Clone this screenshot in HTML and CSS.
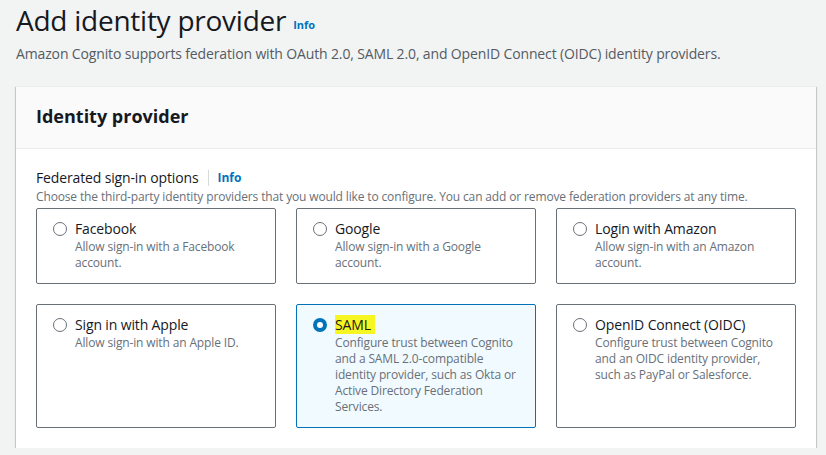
FILE: index.html
```html
<!DOCTYPE html>
<html>
<head>
<meta charset="utf-8">
<link rel="stylesheet" href="styles.css">
</head>
<body>
<div class="page">
  <header class="page-head">
    <h1 class="title">Add identity provider <a class="info info-sm">Info</a></h1>
    <p class="subtitle">Amazon Cognito supports federation with OAuth 2.0, SAML 2.0, and OpenID Connect (OIDC) identity providers.</p>
  </header>
  <section class="card">
    <div class="card-head">
      <h2 class="card-title">Identity provider</h2>
    </div>
    <div class="card-body">
      <div class="field-label">
        <span>Federated sign-in options</span>
        <span class="sep"></span>
        <a class="info">Info</a>
      </div>
      <div class="field-desc">Choose the third-party identity providers that you would like to configure. You can add or remove federation providers at any time.</div>
      <div class="tiles">
        <label class="tile">
          <span class="radio"></span>
          <span class="tile-text">
            <span class="tile-label">Facebook</span>
            <span class="tile-desc">Allow sign-in with a Facebook account.</span>
          </span>
        </label>
        <label class="tile">
          <span class="radio"></span>
          <span class="tile-text">
            <span class="tile-label">Google</span>
            <span class="tile-desc">Allow sign-in with a Google account.</span>
          </span>
        </label>
        <label class="tile">
          <span class="radio"></span>
          <span class="tile-text">
            <span class="tile-label">Login with Amazon</span>
            <span class="tile-desc">Allow sign-in with an Amazon account.</span>
          </span>
        </label>
        <label class="tile">
          <span class="radio"></span>
          <span class="tile-text">
            <span class="tile-label">Sign in with Apple</span>
            <span class="tile-desc">Allow sign-in with an Apple ID.</span>
          </span>
        </label>
        <label class="tile selected">
          <span class="radio checked"></span>
          <span class="tile-text">
            <span class="tile-label"><mark class="hl">SAML</mark></span>
            <span class="tile-desc">Configure trust between Cognito and a SAML 2.0-compatible identity provider, such as Okta or Active Directory Federation Services.</span>
          </span>
        </label>
        <label class="tile">
          <span class="radio"></span>
          <span class="tile-text">
            <span class="tile-label">OpenID Connect (OIDC)</span>
            <span class="tile-desc">Configure trust between Cognito and an OIDC identity provider, such as PayPal or Salesforce.</span>
          </span>
        </label>
      </div>
    </div>
  </section>
</div>
</body>
</html>
```
FILE: styles.css
```css
html, body {
  margin: 0;
  padding: 0;
  background: #f2f3f3;
  font-family: "Open Sans", "Noto Sans", sans-serif;
  color: #16191f;
  letter-spacing: -0.14px;
}
.page {
  padding: 0 10px 0 16px;
}
.title {
  margin: 0;
  font-size: 28px;
  font-weight: 400;
  line-height: 40px;
  height: 40px;
  color: #16191f;
  letter-spacing: -0.25px;
}
.info {
  color: #0073bb;
  font-weight: 700;
  font-size: 12px;
  text-decoration: none;
  letter-spacing: 0;
}
.info-sm {
  font-size: 11px;
  vertical-align: 2px;
}
.subtitle {
  margin: 4px 0 0;
  font-size: 14px;
  line-height: 20px;
  color: #545b64;
}
.card {
  margin-top: 22px;
  background: #fff;
  border-top: 1px solid #eaeded;
  box-shadow: 0 1px 1px 0 rgba(0,28,36,0.3), 1px 1px 1px 0 rgba(0,28,36,0.15), -1px 1px 1px 0 rgba(0,28,36,0.15);
  width: 800px;
}
.card-head {
  background: #fafafa;
  border-bottom: 1px solid #eaeded;
  padding: 17px 20px 0;
  height: 44px;
}
.card-title {
  margin: 0;
  font-size: 18px;
  font-weight: 700;
  line-height: 24px;
  letter-spacing: 0;
}
.card-body {
  padding: 18px 20px 20px;
}
.field-label {
  display: flex;
  align-items: center;
  font-size: 14px;
  line-height: 22px;
}
.field-label .sep {
  width: 1px;
  height: 16px;
  background: #d5dbdb;
  margin: 0 8px 0 10px;
}
.field-label .info {
  font-size: 12px;
}
.field-desc {
  font-size: 12px;
  line-height: 16px;
  color: #687078;
}
.tiles {
  margin-top: 3px;
  display: grid;
  grid-template-columns: repeat(3, 240px);
  grid-template-rows: 76px 124px;
  column-gap: 20px;
  row-gap: 20px;
}
.tile {
  box-sizing: border-box;
  border: 1px solid #687078;
  border-radius: 2px;
  padding: 10px 16px 10px 16px;
  display: flex;
  align-items: flex-start;
  gap: 8px;
}
.tile.selected {
  border-color: #0073bb;
  background: #f1faff;
}
.radio {
  box-sizing: border-box;
  width: 14px;
  height: 14px;
  border-radius: 50%;
  border: 1px solid #687078;
  margin-top: 3px;
  flex: none;
  background: #fff;
}
.radio.checked {
  border: 4px solid #0073bb;
}
.tile-text {
  display: flex;
  flex-direction: column;
}
.tile-label {
  font-size: 14px;
  line-height: 20px;
}
.tile-desc {
  font-size: 12px;
  line-height: 16px;
  color: #687078;
}
.hl {
  background: #f6f622;
  color: #16191f;
  padding: 0 4px 0 0;
}
```
